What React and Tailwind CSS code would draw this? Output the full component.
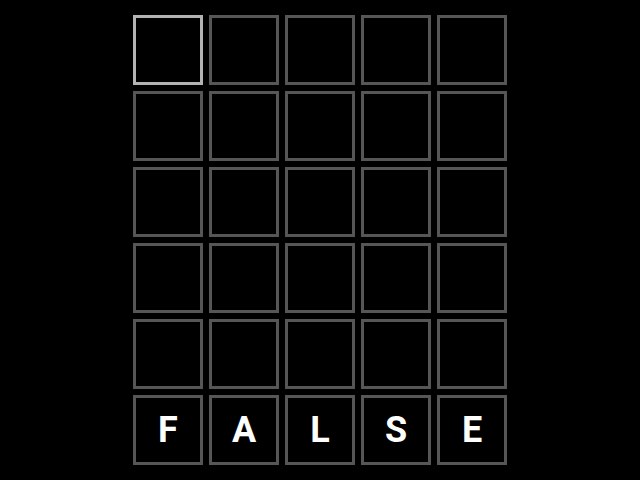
const rows = [
  ['', '', '', '', ''],
  ['', '', '', '', ''],
  ['', '', '', '', ''],
  ['', '', '', '', ''],
  ['', '', '', '', ''],
  ['F', 'A', 'L', 'S', 'E'],
];

export default function App() {
  return (
    <div className="w-[640px] h-[480px] bg-black flex justify-center py-[15px] font-['Roboto',sans-serif]">
      <div className="grid grid-cols-5 gap-[6px]">
        {rows.map((row, r) =>
          row.map((ch, c) => (
            <div
              key={`${r}-${c}`}
              className={
                'w-[70px] h-[70px] border-[3px] flex items-center justify-center text-white font-bold text-[36px] ' +
                (r === 0 && c === 0 ? 'border-[#b3b3b3]' : 'border-[#565656]')
              }
            >
              {ch}
            </div>
          ))
        )}
      </div>
    </div>
  );
}
